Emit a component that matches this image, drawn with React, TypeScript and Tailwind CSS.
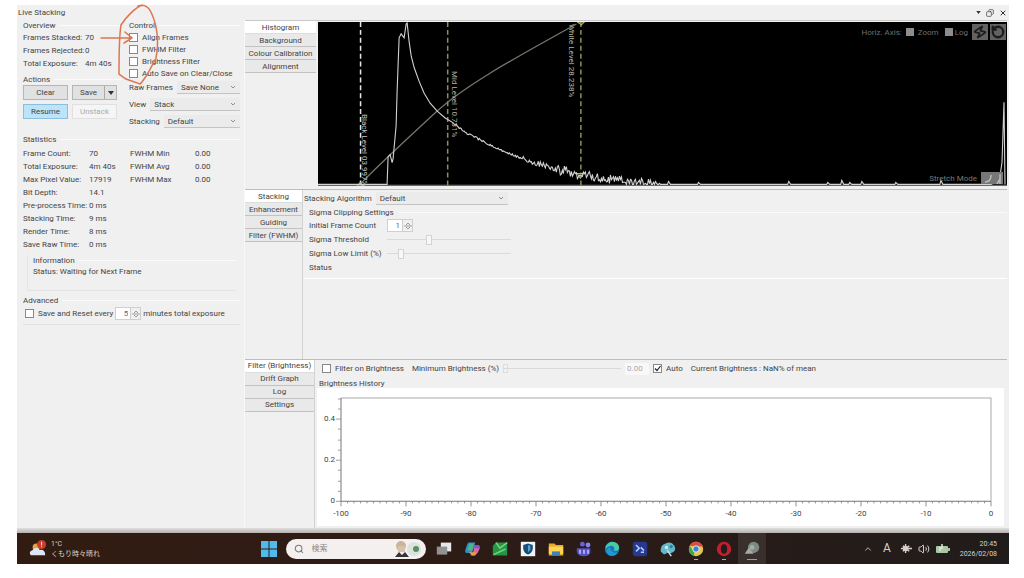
import type { ReactNode } from 'react';
import { ChevronUp, Copy, Search, Volume2, X, RotateCcw, Zap } from 'lucide-react';

const overview = [
  ['Frames Stacked:', '70'],
  ['Frames Rejected:', '0'],
  ['Total Exposure:', '4m 40s'],
];

const statistics = [
  ['Frame Count:', '70', 'FWHM Min', '0.00'],
  ['Total Exposure:', '4m 40s', 'FWHM Avg', '0.00'],
  ['Max Pixel Value:', '17919', 'FWHM Max', '0.00'],
  ['Bit Depth:', '14.1', '', ''],
  ['Pre-process Time:', '0 ms', '', ''],
  ['Stacking Time:', '9 ms', '', ''],
  ['Render Time:', '8 ms', '', ''],
  ['Save Raw Time:', '0 ms', '', ''],
];

const controls = ['Align Frames', 'FWHM Filter', 'Brightness Filter', 'Auto Save on Clear/Close'];

const xTicks = ['-100', '-90', '-80', '-70', '-60', '-50', '-40', '-30', '-20', '-10', '0'];
const yTicks = ['0.4', '0.2', '0'];

// Histogram trace: smooth anchors first, noise is added on the tail
const curve = [
  [0, 164], [69, 164], [70, 136], [72, 134], [74, 142], [75, 138], [78, 105], [79, 70], [81, 16], [83, 12], [86, 16],
  [88, 2], [89, 1], [91, 20], [93, 34], [96, 46], [101, 60], [106, 72], [112, 82], [119, 90], [127, 97], [135, 102],
  [148, 112], [162, 119], [175, 126], [189, 132], [212, 141], [239, 149], [262, 154], [295, 160], [325, 163], [345, 164],
];

function histogramPoints() {
  const points: string[] = [];
  for (let i = 0; i < curve.length - 1; i++) {
    const [x0, y0] = curve[i];
    const [x1, y1] = curve[i + 1];
    if (x0 < 135) {
      points.push(`${x0},${y0}`);
      continue;
    }
    for (let x = x0; x < x1; x += 1) {
      const base = y0 + ((y1 - y0) * (x - x0)) / (x1 - x0);
      const amp = x < 205 ? 1 : x < 240 ? 3 : 5;
      const seed = Math.sin(x * 127.1) * 43758.5;
      const noise = (seed - Math.floor(seed) - 0.5) * 2 * amp;
      points.push(`${x},${Math.min(164, base + noise).toFixed(1)}`);
    }
  }
  const spikes = [[350, 161], [380, 162], [470, 161], [509, 162], [523, 160], [531, 162], [543, 161], [577, 162], [622, 160]];
  spikes.forEach(([x, y]) => points.push(`${x - 1},164`, `${x},${y}`, `${x + 2},164`));
  points.push('672,164', '678,161', '681,156', '683,142', '685,81', '686,164');
  return points.join(' ');
}

function GroupTitle({ children }: { children: ReactNode }) {
  return (
    <div className="flex h-[11px] items-center gap-1">
      <span className="whitespace-nowrap">{children}</span>
      <span className="h-px flex-1 bg-[#fbfbfb]" />
    </div>
  );
}

function Check({ label, checked = false }: { label: string; checked?: boolean }) {
  return (
    <label className="flex h-3 items-center gap-1 whitespace-nowrap">
      <span className="relative flex">
        <input type="checkbox" defaultChecked={checked} className="peer size-[9px] appearance-none border border-[#888] bg-white" />
        <svg viewBox="0 0 9 9" className="pointer-events-none absolute size-[9px] opacity-0 peer-checked:opacity-100">
          <path d="M2 4.5 4 6.500 7.500 2" fill="none" stroke="#222" strokeWidth="1.200" />
        </svg>
      </span>
      {label}
    </label>
  );
}

function Combo({ label, value, className = '' }: { label: string; value: string; className?: string }) {
  return (
    <label className={`flex h-[17px] items-center gap-1 whitespace-nowrap ${className}`}>
      {label}
      <span className="relative flex h-[13px] flex-1 items-center border-b border-[#c4c4c4] bg-[#ebebeb]">
        <select className="w-full appearance-none pl-1">
          <option>{value}</option>
        </select>
        <svg viewBox="0 0 6 4" className="pointer-events-none absolute right-1 h-1 w-[6px]">
          <path d="M1 1l2 2 2-2" fill="none" stroke="#777" strokeWidth="0.800" />
        </svg>
      </span>
    </label>
  );
}

function Spinner({ label, value }: { label: string; value: string }) {
  return (
    <span className="flex h-[13px] border border-[#d0d0d0] bg-white">
      <input aria-label={label} defaultValue={value} className="w-3 text-right text-[#666]" />
      <button aria-label="Change value" className="ml-[2px] flex w-[10px] items-center justify-center border-l border-[#ccc] bg-[#f0f0f0]">
        <svg viewBox="0 0 8 10" className="h-[10px] w-2">
          <path d="M2 4l2-2 2 2M2 6l2 2 2-2M0 5h8" fill="none" stroke="#888" strokeWidth="0.800" />
        </svg>
      </button>
    </span>
  );
}

function Tabs({ items, className }: { items: string[]; className: string }) {
  return (
    <nav className={`flex shrink-0 flex-col ${className}`}>
      {items.map((item, i) => (
        <button
          key={item}
          className={`h-[13px] overflow-hidden whitespace-nowrap border-b text-center ${
            i === 0 ? 'border-[#ddd] bg-white' : 'border-[#c2c2c2] bg-[#e9e9e9]'
          }`}
        >
          {item}
        </button>
      ))}
    </nav>
  );
}

function Slider({ label, value }: { label: string; value: number }) {
  return (
    <input
      type="range"
      aria-label={label}
      defaultValue={value}
      className="h-[10px] w-[124px] appearance-none bg-transparent [&::-webkit-slider-runnable-track]:h-px [&::-webkit-slider-runnable-track]:bg-[#dadada] [&::-webkit-slider-thumb]:-mt-1 [&::-webkit-slider-thumb]:h-[10px] [&::-webkit-slider-thumb]:w-[6px] [&::-webkit-slider-thumb]:appearance-none [&::-webkit-slider-thumb]:border [&::-webkit-slider-thumb]:border-[#d4d4d4] [&::-webkit-slider-thumb]:bg-[#f8f8f8]"
    />
  );
}

function SidePanel() {
  return (
    <aside className="w-[228px] shrink-0 border-r border-[#f8f8f8] pl-[6px] pr-[4px]">
      <div className="flex gap-[6px]">
        <section className="w-[98px]">
          <GroupTitle>Overview</GroupTitle>
          {overview.map(([name, value]) => (
            <div key={name} className="flex h-[13px] items-center">
              <span className="w-[62px] whitespace-nowrap">{name}</span>
              <span className="whitespace-nowrap">{value}</span>
            </div>
          ))}
          <div className="mt-1">
            <GroupTitle>Actions</GroupTitle>
          </div>
          <div className="grid grid-cols-[45px_45px] gap-x-1 gap-y-1">
            <button className="h-[15px] border border-[#b5b5b5] bg-[#e1e1e1]">Clear</button>
            <div className="flex h-[15px] border border-[#b5b5b5] bg-[#e1e1e1]">
              <button className="flex-1">Save</button>
              <button aria-label="Save options" className="flex w-3 items-center justify-center border-l border-[#aaa]">
                <svg viewBox="0 0 6 4" className="h-1 w-[6px]"><path d="M0 0h6L3 4z" fill="#333" /></svg>
              </button>
            </div>
            <button className="h-[15px] border border-[#8cbfdd] bg-[#bde3f8]">Resume</button>
            <button disabled className="h-[15px] border border-[#e0e0e0] bg-[#f5f5f5] text-[#aaa]">Unstack</button>
          </div>
        </section>
        <section className="relative flex-1 pl-[2px]">
          <GroupTitle>Control</GroupTitle>
          {controls.map((c) => <Check key={c} label={c} />)}
          <Combo label="Raw Frames" value="Save None" />
          <Combo label="View" value="Stack" />
          <Combo label="Stacking" value="Default" />
          <svg viewBox="0 0 64 84" className="pointer-events-none absolute -left-[28px] -top-[17px] h-[84px] w-[64px]" fill="none" stroke="#dd7650" strokeWidth="1.500" strokeLinecap="round">
            <path d="M43 2C36 5 27 14 22 22C20 34 20 59 20 71L27 76L41 81C43 80 44 77 48 72L57 55C60 39 58 22 52 9C50 4 45 1 39 3" />
            <path d="M2 35h31M26 29l7 6-8 5" />
          </svg>
        </section>
      </div>

      <section className="mt-1">
        <GroupTitle>Statistics</GroupTitle>
        <table className="mt-[2px] w-full table-fixed text-left">
          <tbody>
            {statistics.map(([name, value, fwhm, amount]) => (
              <tr key={name} className="h-[13px] whitespace-nowrap">
                <th scope="row" className="w-[66px] p-0 font-normal">{name}</th>
                <td className="w-[41px] p-0">{value}</td>
                <td className="w-[65px] p-0">{fwhm}</td>
                <td className="p-0">{amount}</td>
              </tr>
            ))}
          </tbody>
        </table>
      </section>

      <section className="ml-1 mr-1 mt-1 h-9 border-b border-l border-[#e4e4e4] pl-[5px]">
        <GroupTitle>Information</GroupTitle>
        <p className="h-[13px]">Status: Waiting for Next Frame</p>
      </section>

      <section className="mt-1 border-b border-[#e0e0e0] pb-1">
        <GroupTitle>Advanced</GroupTitle>
        <div className="flex items-center gap-[2px] pl-[2px] pt-px">
          <Check label="Save and Reset every" />
          <Spinner label="Minutes" value="5" />
          <span className="whitespace-nowrap">minutes total exposure</span>
        </div>
      </section>
    </aside>
  );
}

function Histogram() {
  return (
    <div className="relative mb-[3px] ml-[2px] mt-px flex-1 overflow-hidden bg-black text-[#8a8a8a]">
      <svg viewBox="0 0 688 166" preserveAspectRatio="none" className="absolute h-full w-full" fill="none">
        <path d="M0 165H688" stroke="#8b8b85" />
        <path d="M43 163C58 147 89 118 119 90S205 32 258 2" stroke="#77766a" strokeWidth="1.300" />
        <path d="M42.500 0V165" stroke="#e4e4e4" strokeWidth="1.500" strokeDasharray="5 3" />
        <path d="M129.500 0V165M262.500 0V165" stroke="#8f8f5c" strokeWidth="1.500" strokeDasharray="5 3" />
        <path d="M39 166l3-4 3 4zM259 0h7l-3 3zM259 153l3 5 3-5z" stroke="#b6b96c" />
        <polyline points={histogramPoints()} stroke="#d2d2d2" strokeWidth="1.100" />
      </svg>
      <span className="absolute left-[6%] top-[56%] whitespace-nowrap leading-[10px] text-[#c8c8c8] [writing-mode:vertical-rl]">Black Level 03.997%</span>
      <span className="absolute left-[19%] top-[30%] whitespace-nowrap leading-[10px] text-[#b5b5a0] [writing-mode:vertical-rl]">Mid Level 10.731%</span>
      <span className="absolute left-[36%] top-[1%] whitespace-nowrap leading-[10px] text-[#b5b5a0] [writing-mode:vertical-rl]">White Level 28.238%</span>
      <div className="absolute right-px top-[2px] flex items-center gap-1 text-[#6e6e6e]">
        <span>Horiz. Axis:</span>
        <label className="flex items-center gap-1"><input type="checkbox" className="size-2 appearance-none bg-[#8d8d8d]" />Zoom</label>
        <label className="ml-[2px] flex items-center gap-[2px]"><input type="checkbox" className="size-2 appearance-none bg-[#8d8d8d]" />Log</label>
        <div className="flex gap-[2px]">
          <button aria-label="Auto stretch" className="flex size-4 items-center justify-center bg-[#626262] text-[#1c1c1c]"><Zap size={14} strokeWidth={3} className="rotate-12" /></button>
          <button aria-label="Reset" className="flex size-4 items-center justify-center bg-[#626262] text-[#1c1c1c]"><RotateCcw size={14} strokeWidth={4} /></button>
        </div>
      </div>
      <div className="absolute bottom-[2px] right-1 flex items-center gap-1 text-[#777]">
        <span>Stretch Mode</span>
        <button aria-label="Stretch mode" className="flex h-3 w-[22px] items-center justify-center bg-[#777]">
          <svg viewBox="0 0 20 12" className="h-3 w-5"><path d="M3 10Q9 10 9 3M18 2v10M15 12l3-5" fill="none" stroke="#bbb" strokeWidth="1.500" /></svg>
        </button>
      </div>
    </div>
  );
}

function StackingPanel() {
  return (
    <div className="flex-1 border-l border-[#d2d2d2] pl-px">
      <Combo label="Stacking Algorithm" value="Default" className="w-[204px]" />
      <div className="flex flex-col gap-px border-b border-white pb-1 pl-[5px]">
        <GroupTitle>Sigma Clipping Settings</GroupTitle>
        <div className="flex h-[13px] items-center"><span className="w-[78px]">Initial Frame Count</span><Spinner label="Initial Frame Count" value="1" /></div>
        <div className="flex h-[13px] items-center"><span className="w-[78px]">Sigma Threshold</span><Slider label="Sigma Threshold" value={33} /></div>
        <div className="flex h-[13px] items-center"><span className="w-[78px]">Sigma Low Limit (%)</span><Slider label="Sigma Low Limit" value={9} /></div>
        <div className="flex h-[13px] items-center">Status</div>
      </div>
    </div>
  );
}

function BrightnessPanel() {
  const minor = Array.from({ length: 101 }, (_, i) => `M${i * 6.48} 103v${i % 10 === 0 ? 5 : 2}`).join('');
  return (
    <div className="flex flex-1 flex-col border-l border-[#d2d2d2] pl-[2px]">
      <div className="flex h-[18px] items-center gap-1 pl-[5px]">
        <Check label="Filter on Brightness" />
        <label htmlFor="minimum" className="ml-1 whitespace-nowrap">Minimum Brightness (%)</label>
        <input id="minimum" type="range" defaultValue={0} className="h-[9px] w-[118px] appearance-none bg-transparent [&::-webkit-slider-runnable-track]:h-px [&::-webkit-slider-runnable-track]:bg-[#dadada] [&::-webkit-slider-thumb]:-mt-1 [&::-webkit-slider-thumb]:h-[9px] [&::-webkit-slider-thumb]:w-[5px] [&::-webkit-slider-thumb]:appearance-none [&::-webkit-slider-thumb]:border [&::-webkit-slider-thumb]:border-[#ddd]" />
        <input aria-label="Minimum value" defaultValue="0.00" className="h-3 w-6 bg-[#f8f8f8] pl-[2px] text-[#aaa]" />
        <Check label="Auto" checked />
        <span className="ml-1 whitespace-nowrap">Current Brightness : NaN% of mean</span>
      </div>
      <h2 className="h-[10px] pl-[2px]">Brightness History</h2>
      <div className="mb-[2px] mr-[3px] flex flex-1 flex-col bg-white pr-[13px] pt-[10px]">
        <div className="flex flex-1">
          <div className="flex w-6 flex-col items-end justify-between pr-[6px] pt-[21px]">
            {yTicks.map((t) => <span key={t} className="flex h-0 items-center">{t}</span>)}
          </div>
          <div className="relative flex-1">
            <svg viewBox="0 0 648 103" preserveAspectRatio="none" className="absolute h-full w-full overflow-visible" fill="none">
              <path d="M0 0H648V103" stroke="#aaa" />
              <path d="M0 0V103H648" stroke="#777" />
              <path d={minor} stroke="#777" strokeWidth="0.800" />
              <path d="M-5 103h5M-5 62h5M-5 21h5M-3 93h3M-3 83h3M-3 72h3M-3 52h3M-3 42h3M-3 31h3M-3 11h3M-3 1h3" stroke="#888" strokeWidth="0.800" />
            </svg>
          </div>
        </div>
        <div className="ml-6 flex h-[25px] justify-between">
          {xTicks.map((t) => <span key={t} className="flex w-0 items-center justify-center">{t}</span>)}
        </div>
      </div>
    </div>
  );
}

const apps = [
  { name: 'Task View', art: <><path d="M6 2h13v11H6z" fill="#e8e8e8" /><path d="M1 7h13v10H1z" fill="#929292" /></> },
  { name: 'Copilot', art: <><path d="M6 2h8l-4 13H4Q0 15 2 10L4 4Q5 2 6 2z" fill="#328bd0" /><path d="M4 11 7 3h6l-3 10z" fill="#47b788" /><path d="M12 5h5q4 0 2 6l-2 4q-2 3-5 3H8q3-2 4-6z" fill="#df659d" /><path d="M12 5h5q3 0 2 4h-8z" fill="#755ed0" /><path d="M6 14l4 4h4l1-4z" fill="#ef9b3f" /></> },
  { name: 'Sheets', art: <><path d="M5 2h14v16H1V6z" fill="#249447" /><path d="M5 2l5 7 9-7M2 17l15-7" stroke="#79d378" strokeWidth="2" fill="none" /></> },
  { name: 'Security', art: <><path d="M1 1h18v18H1z" fill="#f2f5f7" /><path d="M10 3l6 2v5q-1 5-6 7-5-2-6-7V5z" fill="#174d79" /><path d="M10 5v9l3-3V6z" fill="#56a1c9" /></> },
  { name: 'File Explorer', art: <><path d="M1 3h7l2 2h9v13H1z" fill="#eda92c" /><path d="M1 7h18v9H1z" fill="#ffd553" /><path d="M5 13h10v5H5z" fill="#3f82b6" /></> },
  { name: 'Teams', art: <><circle cx="8" cy="4" r="3" fill="#6665d7" /><circle cx="15" cy="5" r="3" fill="#8884eb" /><path d="M1 9h17v5q-1 5-8 5-8 0-9-6z" fill="#5552c1" /><path d="M5 11v5M10 11v5M15 11v5" stroke="#c4c1ff" strokeWidth="2" /></> },
  { name: 'Edge', art: <><circle cx="10" cy="10" r="9" fill="#1676bd" /><path d="M2 7Q5 1 11 1q8 1 8 8-1 4-7 3 3-4-2-6-5 0-8 4z" fill="#47cba5" /><path d="M8 8q-1 6 9 7-4 5-10 3-4-2-4-6 1-4 5-4z" fill="#209ad5" /></> },
  { name: 'Remote', art: <><rect x="1" y="1" width="18" height="18" rx="3" fill="#253990" /><path d="M5 5l4 4-4 4M11 14h4M11 8l4 4" stroke="#b8c9ff" strokeWidth="2" fill="none" /></> },
  { name: 'Paint', art: <><path d="M1 13Q0 5 7 3q7-3 11 3 3 7-4 9H9l-4 2z" fill="#63b8ca" /><circle cx="8" cy="8" r="2" fill="#d9eef1" /><circle cx="14" cy="7" r="2" fill="#297f9c" /><path d="M9 11l5 8" stroke="#c8dce0" strokeWidth="2" /></> },
  { name: 'Chrome', running: true, art: <><circle cx="10" cy="10" r="9" fill="#e7c64e" /><path d="M2 6Q5 1 10 1q6 0 9 6H10z" fill="#d84e40" /><path d="M2 6l6 8-1 5Q1 16 1 10z" fill="#43a353" /><circle cx="10" cy="10" r="4" fill="#3f83d4" stroke="#fff" /></> },
  { name: 'Opera', running: true, art: <><circle cx="10" cy="10" r="9" fill="#be202f" /><ellipse cx="10" cy="10" rx="4" ry="6" fill="#261b1b" /></> },
];

function Taskbar() {
  return (
    <footer className="grid h-[31px] grid-cols-[1fr_auto_1fr] items-center bg-gradient-to-r from-[#321c11] via-[#2c1b16] to-[#201c1b] pl-3 pr-3 text-[7px] text-[#d7d0cb]">
      <div className="flex items-center gap-1">
        <svg viewBox="0 0 20 20" className="size-[18px]">
          <circle cx="8" cy="8" r="4" fill="#e3a148" />
          <path d="M2 17q-3-4 2-6 4-5 8 0 6-1 6 6z" fill="#dce6f6" />
          <circle cx="14" cy="5" r="5" fill="#c93c2b" />
          <path d="M14 2v4M14 7v1" stroke="#fff" />
        </svg>
        <div className="leading-[10px]">
          <div>1°C</div>
          <div>くもり時々晴れ</div>
        </div>
      </div>
      <div className="flex items-center">
        <button aria-label="Start" className="mr-[9px]">
          <svg viewBox="0 0 16 16" className="size-4"><path d="M0 0h7.500v7.500H0zM8.500 0H16v7.500H8.500zM0 8.500h7.500V16H0zM8.500 8.500H16V16H8.500z" fill="#51b9eb" /></svg>
        </button>
        <label className="flex h-5 w-[140px] items-center gap-2 rounded-full bg-[#f4f0ef] pl-2 pr-1 text-[#777]">
          <Search size={10} strokeWidth={2.5} />
          <input aria-label="検索" placeholder="検索" className="min-w-0 flex-1 text-[8px] placeholder:text-[#888]" />
          <svg viewBox="0 0 28 18" className="h-[18px] w-7">
            <circle cx="20" cy="9" r="7" fill="#dce3dc" />
            <circle cx="22" cy="9" r="3" fill="#579160" />
            <circle cx="7" cy="6" r="5" fill="#cbb497" />
            <path d="M4 6h7v6H4z" fill="#d7c2ae" />
            <path d="M1 17l4-5 3 3 3-3 4 5z" fill="#35363a" />
          </svg>
        </label>
        <div className="ml-1 flex">
          {apps.map((app) => (
            <button key={app.name} aria-label={app.name} className="relative flex h-[31px] w-7 items-center justify-center">
              <svg viewBox="0 0 20 20" className="size-4">{app.art}</svg>
              {app.running && <span className="absolute bottom-1 h-px w-1 bg-[#aaa]" />}
            </button>
          ))}
          <button aria-label="SharpCap" className="relative flex h-[31px] w-7 items-center justify-center bg-[#39302e]">
            <svg viewBox="0 0 20 20" className="size-4"><circle cx="12" cy="8" r="7" fill="#7e8984" /><path d="M1 16l5-8 6 8z" fill="#a4aaa6" /><circle cx="10" cy="8" r="3" fill="#a4aea8" /></svg>
            <span className="absolute bottom-1 h-px w-[10px] bg-[#79a7c2]" />
          </button>
        </div>
      </div>
      <div className="flex items-center justify-end gap-[6px]">
        <ChevronUp size={10} />
        <span className="px-1 text-[12px]">A</span>
        <svg viewBox="0 0 12 12" className="size-[11px]"><path d="M0 6h12M5 1v10M2 3l7 6M9 3L2 9" stroke="#d7d0cb" strokeWidth="1.500" /><circle cx="5" cy="6" r="3" fill="#d7d0cb" /></svg>
        <Volume2 size={12} />
        <svg viewBox="0 0 14 10" className="h-[10px] w-[14px]"><rect x="0" y="2" width="12" height="7" rx="1" fill="#a9c9a3" /><path d="M13 4v3M6 0v5M4 3v4" stroke="#e3e8df" strokeWidth="1.500" /></svg>
        <div className="ml-1 text-right leading-[10px]">
          <div>20:45</div>
          <div>2026/02/08</div>
        </div>
      </div>
    </footer>
  );
}

export default function App() {
  return (
    <div className="flex min-h-screen flex-col bg-white pb-[14px] pl-[17px] pr-[15px] pt-[5px] font-[Roboto,'Noto_Sans_CJK_JP',sans-serif] text-[8px] leading-[11px] text-[#444]">
      <main className="flex flex-1 flex-col bg-[#f0f0f0] pr-[2px]">
        <header className="flex h-[15px] items-center justify-between pl-px">
          <h1>Live Stacking</h1>
          <div className="flex items-center gap-[5px] text-[#333]">
            <button aria-label="Options"><svg viewBox="0 0 6 4" className="h-[3px] w-[5px]"><path d="M0 0h6L3 4z" fill="currentColor" /></svg></button>
            <button aria-label="Restore"><Copy size={8} className="-scale-x-100" /></button>
            <button aria-label="Close"><X size={8} strokeWidth={3} /></button>
          </div>
        </header>
        <div className="flex flex-1">
          <SidePanel />
          <div className="grid min-w-0 flex-1 grid-rows-3">
            <section className="flex border-t border-[#c9c9c9]">
              <Tabs className="w-[71px]" items={['Histogram', 'Background', 'Colour Calibration', 'Alignment']} />
              <Histogram />
            </section>
            <section className="flex border-t border-[#bcbcbc]">
              <Tabs className="w-[57px]" items={['Stacking', 'Enhancement', 'Guiding', 'Filter (FWHM)']} />
              <StackingPanel />
            </section>
            <section className="flex border-t border-[#bcbcbc]">
              <Tabs className="w-[69px]" items={['Filter (Brightness)', 'Drift Graph', 'Log', 'Settings']} />
              <BrightnessPanel />
            </section>
          </div>
        </div>
        <div className="-mr-[2px] h-[5px] bg-gradient-to-b from-[#e0e0e0] to-[#b5b0ad]" />
      </main>
      <Taskbar />
    </div>
  );
}
